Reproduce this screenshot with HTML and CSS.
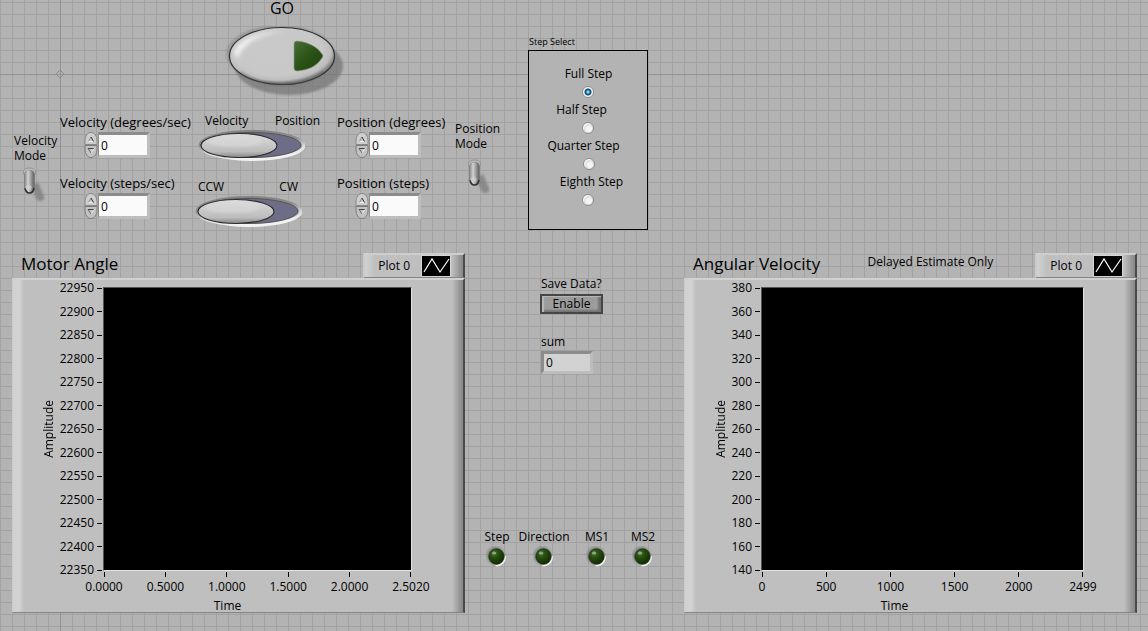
FILE: index.html
```
<!DOCTYPE html>
<html lang="en">
<head>
<meta charset="utf-8">
<title>Motor Control</title>
<link rel="stylesheet" href="styles.css">
</head>
<body>
<svg class="defs" aria-hidden="true">
  <defs>
    <linearGradient id="metal" x1="0" y1="0" x2="0" y2="1">
      <stop offset="0" stop-color="#dedede"/><stop offset=".3" stop-color="#cfcfcf"/><stop offset=".75" stop-color="#bcbcbc"/><stop offset="1" stop-color="#858585"/>
    </linearGradient>
    <radialGradient id="dome" cx=".46" cy=".42" r=".56">
      <stop offset="0" stop-color="#c9c9c9"/><stop offset=".75" stop-color="#c8c8c8"/><stop offset=".9" stop-color="#bdbdbd"/><stop offset="1" stop-color="#7d7d7d"/>
    </radialGradient>
    <linearGradient id="rim" x1="0" y1="0" x2=".3" y2="1">
      <stop offset="0" stop-color="#808080"/><stop offset=".45" stop-color="#8c8c8c"/><stop offset=".75" stop-color="#dcdcdc"/><stop offset="1" stop-color="#f2f2f2"/>
    </linearGradient>
    <linearGradient id="stick" x1="0" y1="0" x2="1" y2="0">
      <stop offset="0" stop-color="#858585"/><stop offset=".35" stop-color="#d2d2d2"/><stop offset="1" stop-color="#5c5c5c"/>
    </linearGradient>
    <linearGradient id="arrow" x1="0" y1="0" x2="1" y2="1">
      <stop offset="0" stop-color="#4a6f38"/><stop offset=".5" stop-color="#2b5216"/><stop offset="1" stop-color="#1d4208"/>
    </linearGradient>
    <radialGradient id="lamp" cx=".35" cy=".3" r=".75">
      <stop offset="0" stop-color="#4f7540"/><stop offset=".35" stop-color="#28500f"/><stop offset="1" stop-color="#0f2903"/>
    </radialGradient>
    <filter id="soft" x="-20%" y="-20%" width="140%" height="140%"><feGaussianBlur stdDeviation="1"/></filter>
    <filter id="softer" x="-20%" y="-20%" width="140%" height="140%"><feGaussianBlur stdDeviation="2"/></filter>

    <symbol id="switch" viewBox="0 0 108 31">
      <ellipse cx="55" cy="15.500" rx="52" ry="14" fill="none" stroke="url(#rim)" stroke-width="3"/>
      <ellipse cx="54" cy="15" rx="50" ry="12.500" fill="#6d6d87" stroke="#555" stroke-width="1"/>
      <ellipse cx="42" cy="15.500" rx="38" ry="12" fill="url(#metal)" stroke="#2e2e2e" stroke-width="1.200"/>
      <ellipse cx="38" cy="11.500" rx="27" ry="5.500" fill="#dadada" opacity=".6" filter="url(#soft)"/>
    </symbol>
    <symbol id="lever" viewBox="0 0 24 36">
      <path d="M9 20 L16 15 L22 29 Q23 34 18 34 Q15 34 14 31Z" fill="#808080" opacity=".8" filter="url(#soft)"/>
      <ellipse cx="7.500" cy="5.500" rx="6" ry="4.500" fill="#c9c9c9" stroke="#8f8f8f"/>
      <rect x="2.500" y="3" width="10" height="23" rx="4.500" fill="url(#stick)" stroke="#777" stroke-width=".6"/>
      <path d="M3 21 Q4 26 7.500 26 Q11 26 12 21" fill="none" stroke="#303030" stroke-width="1.400"/>
      <ellipse cx="6.500" cy="20.500" rx="3" ry="2.500" fill="#d0d0d0" opacity=".8"/>
    </symbol>
    <symbol id="led" viewBox="0 0 22 22">
      <circle cx="9.500" cy="9.500" r="9" fill="#7c7c7c" filter="url(#soft)" opacity=".8"/>
      <path d="M19 10 A8.500 8.500 0 0 1 9.500 19.500" fill="none" stroke="#f0f0f0" stroke-width="1.600"/>
      <circle cx="10.500" cy="10.500" r="7.700" fill="url(#lamp)" stroke="#1a2d10" stroke-width=".8"/>
      <ellipse cx="8" cy="7" rx="2.200" ry="1.500" fill="#9fb496" opacity=".8"/>
    </symbol>
    <symbol id="up" viewBox="0 0 14 13">
      <path d="M1 12.500 V9 C1 4 3.500 .500 7 .500 S13 4 13 9 V12.500Z" fill="#cecece" stroke="#888"/>
      <path d="M4.500 9.500 L7 5" stroke="#8a8a8a" fill="none"/><path d="M7 5 L9.500 9.500" stroke="#333" fill="none"/><path d="M4.500 9.500 H9" stroke="#eee" fill="none"/>
    </symbol>
    <symbol id="down" viewBox="0 0 14 13">
      <path d="M1 .500 V4 C1 9 3.500 12.500 7 12.500 S13 9 13 4 V.500Z" fill="#c2c2c2" stroke="#7c7c7c"/>
      <path d="M4 3.500 H10" stroke="#444" fill="none"/><path d="M10 3.500 L7 8" stroke="#eee" fill="none"/><path d="M7 8 L4 3.500" stroke="#666" fill="none"/>
    </symbol>
    <symbol id="trace" viewBox="0 0 28 20">
      <path d="M2 16 L10 3 L18 16 L27 3" fill="none" stroke="#fff" stroke-width="1.200"/>
    </symbol>
  </defs>
</svg>

<main class="front">
  <svg class="origin" viewBox="0 0 10 10" aria-hidden="true"><path d="M5 1 L9 5 L5 9 L1 5Z" fill="none" stroke="#8c8c8c"/></svg>

  <section class="controls">
    <div class="motor">
      <div class="go">
        <label class="go-label" for="go">GO</label>
        <button id="go" class="bare" type="button">
          <svg width="126" height="72" viewBox="0 0 126 72" aria-hidden="true">
            <ellipse cx="70" cy="40" rx="54" ry="29" fill="#777" opacity=".75" filter="url(#soft)"/>
            <ellipse cx="61" cy="28" rx="54" ry="29" fill="#777" opacity=".4" filter="url(#soft)"/>
            <ellipse cx="63" cy="30" rx="52.500" ry="28.500" fill="url(#dome)" stroke="#303030" stroke-width="1.200"/>
            <path d="M15 28 C17 14 40 5 67 5 C42 8 24 16 19 32Z" fill="#f8f8f8" opacity=".9" filter="url(#softer)"/>
            <path d="M22 46 C42 62 84 62 104 46" fill="none" stroke="#555" stroke-width="2" opacity=".45" filter="url(#soft)"/>
            <path d="M75 18 Q75 15 78 15 C88 16 98 20 103 28 Q105 30 103 32 C98 40 90 44 78 45 Q75 45 75 42Z" fill="url(#arrow)" stroke="#87957f" stroke-width=".7"/>
          </svg>
        </button>
      </div>

      <div class="mode mode-velocity">
        <label for="vmode">Velocity<br>Mode</label>
        <button id="vmode" class="bare" type="button"><svg width="24" height="36"><use href="#lever"/></svg></button>
      </div>

      <div class="numbers">
        <div class="number">
          <label for="vdeg">Velocity (degrees/sec)</label>
          <div class="spin">
            <div class="arrows"><button class="bare" type="button" aria-label="Increase"><svg width="14" height="13"><use href="#up"/></svg></button><button class="bare" type="button" aria-label="Decrease"><svg width="14" height="13"><use href="#down"/></svg></button></div>
            <input id="vdeg" type="text" value="0">
          </div>
        </div>
        <div class="number">
          <label for="vstep">Velocity (steps/sec)</label>
          <div class="spin">
            <div class="arrows"><button class="bare" type="button" aria-label="Increase"><svg width="14" height="13"><use href="#up"/></svg></button><button class="bare" type="button" aria-label="Decrease"><svg width="14" height="13"><use href="#down"/></svg></button></div>
            <input id="vstep" type="text" value="0">
          </div>
        </div>
      </div>

      <div class="switches">
        <div class="switch">
          <div class="ends ends-wide"><span>Velocity</span><span>Position</span></div>
          <button class="bare" type="button" aria-label="Velocity or position"><svg width="108" height="31"><use href="#switch"/></svg></button>
        </div>
        <div class="switch">
          <div class="ends"><span>CCW</span><span>CW</span></div>
          <button class="bare" type="button" aria-label="Counterclockwise or clockwise"><svg width="108" height="31"><use href="#switch"/></svg></button>
        </div>
      </div>

      <div class="numbers numbers-position">
        <div class="number">
          <label for="pdeg">Position (degrees)</label>
          <div class="spin">
            <div class="arrows"><button class="bare" type="button" aria-label="Increase"><svg width="14" height="13"><use href="#up"/></svg></button><button class="bare" type="button" aria-label="Decrease"><svg width="14" height="13"><use href="#down"/></svg></button></div>
            <input id="pdeg" type="text" value="0">
          </div>
        </div>
        <div class="number">
          <label for="pstep">Position (steps)</label>
          <div class="spin">
            <div class="arrows"><button class="bare" type="button" aria-label="Increase"><svg width="14" height="13"><use href="#up"/></svg></button><button class="bare" type="button" aria-label="Decrease"><svg width="14" height="13"><use href="#down"/></svg></button></div>
            <input id="pstep" type="text" value="0">
          </div>
        </div>
      </div>

      <div class="mode mode-position">
        <label for="pmode">Position<br>Mode</label>
        <button id="pmode" class="bare" type="button"><svg width="24" height="36"><use href="#lever"/></svg></button>
      </div>
    </div>

    <div class="steps" role="radiogroup" aria-labelledby="steps-title">
      <div id="steps-title" class="steps-title">Step Select</div>
      <div class="steps-box">
        <div class="step"><label for="s1">Full Step</label><input id="s1" type="radio" name="step" checked></div>
        <div class="step step-half"><label for="s2">Half Step</label><input id="s2" type="radio" name="step"></div>
        <div class="step step-quarter"><label for="s3">Quarter Step</label><input id="s3" type="radio" name="step"></div>
        <div class="step step-eighth"><label for="s4">Eighth Step</label><input id="s4" type="radio" name="step"></div>
      </div>
    </div>
  </section>

  <section class="graphs">
    <article class="graph">
      <header class="graph-head">
        <h2>Motor Angle</h2>
        <div class="legend"><span>Plot 0</span><svg width="28" height="20"><use href="#trace"/></svg></div>
      </header>
      <div class="graph-body angle">
        <div class="y-title"><span>Amplitude</span></div>
        <ol class="y-axis">
          <li>22950</li><li>22900</li><li>22850</li><li>22800</li><li>22750</li><li>22700</li><li>22650</li><li>22600</li><li>22550</li><li>22500</li><li>22450</li><li>22400</li><li>22350</li>
        </ol>
        <div class="plot"></div>
        <ol class="x-axis">
          <li>0.0000</li><li>0.5000</li><li>1.0000</li><li>1.5000</li><li>2.0000</li><li>2.5020</li>
        </ol>
        <div class="x-title">Time</div>
      </div>
    </article>

    <div class="middle">
      <div class="data">
        <label for="save">Save Data?</label>
        <button id="save" class="enable" type="button">Enable</button>
        <label class="sum-label" for="sum">sum</label>
        <input id="sum" class="sum" type="text" value="0" readonly>
      </div>
      <div class="leds">
        <div class="led"><span>Step</span><svg width="22" height="22"><use href="#led"/></svg></div>
        <div class="led"><span>Direction</span><svg width="22" height="22"><use href="#led"/></svg></div>
        <div class="led"><span>MS1</span><svg width="22" height="22"><use href="#led"/></svg></div>
        <div class="led"><span>MS2</span><svg width="22" height="22"><use href="#led"/></svg></div>
      </div>
    </div>

    <article class="graph">
      <header class="graph-head">
        <h2>Angular Velocity</h2>
        <span class="note">Delayed Estimate Only</span>
        <div class="legend"><span>Plot 0</span><svg width="28" height="20"><use href="#trace"/></svg></div>
      </header>
      <div class="graph-body speed">
        <div class="y-title"><span>Amplitude</span></div>
        <ol class="y-axis">
          <li>380</li><li>360</li><li>340</li><li>320</li><li>300</li><li>280</li><li>260</li><li>240</li><li>220</li><li>200</li><li>180</li><li>160</li><li>140</li>
        </ol>
        <div class="plot"></div>
        <ol class="x-axis">
          <li>0</li><li>500</li><li>1000</li><li>1500</li><li>2000</li><li>2499</li>
        </ol>
        <div class="x-title">Time</div>
      </div>
    </article>
  </section>
</main>
</body>
</html>
```

FILE: styles.css
```
* { box-sizing: border-box; }

body {
  margin: 0;
  color: #000;
  font: 12px/16px "Open Sans", "Noto Sans", sans-serif;
}

svg { display: block; }
.defs { position: absolute; width: 0; height: 0; }

.bare {
  display: block;
  margin: 0;
  padding: 0;
  border: 0;
  background: none;
}

ol { margin: 0; padding: 0; list-style: none; }

.front {
  position: relative;
  display: flex;
  flex-direction: column;
  min-height: 100vh;
  padding: 0 11px 18px 12px;
  background:
    linear-gradient(#939393, #939393) 60px 0 / 1px 100% no-repeat,
    linear-gradient(#939393, #939393) 0 74px / 100% 1px no-repeat,
    linear-gradient(90deg, #a2a2a2 1px, transparent 1px) 0 0 / 12px 12px,
    linear-gradient(#a2a2a2 1px, transparent 1px) 0 2px / 12px 12px,
    #b3b3b3;
}

/* marks the zero point of the panel grid */
.origin { position: absolute; left: 55px; top: 69px; width: 10px; height: 10px; }

.controls { display: flex; padding-bottom: 22px; }

.motor {
  display: grid;
  grid-template-columns: 46px 134px 143px 118px 73px;
  grid-template-rows: 112px auto;
  padding-left: 2px;
}

.go {
  grid-column: 3;
  margin-left: 25px;
  width: 126px;
  display: flex;
  flex-direction: column;
  align-items: center;
  gap: 9px;
}
.go-label { font-size: 16px; line-height: 17px; }

.mode, .numbers, .switches { grid-row: 2; }

.mode { line-height: 15px; }
.mode-velocity { grid-column: 1; padding-top: 21px; }
.mode-velocity .bare { margin: 4px 0 0 8px; }
.mode-position { padding-top: 9px; }
.mode-position .bare { margin: 8px 0 0 12px; }

.numbers {
  display: flex;
  flex-direction: column;
  gap: 17px;
  padding-top: 2px;
  white-space: nowrap;
}
.number label { display: block; font-size: 13px; }
.spin { display: flex; align-items: center; margin: 2px 0 0 24px; }
.numbers-position .spin { margin-left: 18px; }

.spin input, .sum {
  font: inherit;
  color: #000;
  border: 3px solid;
  border-color: #8c8c8c #bdbdbd #bdbdbd #8c8c8c;
  padding: 0 0 0 2px;
  background: #fafafa;
}
.spin input { width: 52px; height: 26px; border-left-width: 1px; }

.switches { display: flex; flex-direction: column; gap: 18px; padding-top: 1px; }
.switch .bare { margin-top: 1px; }
.ends { display: flex; justify-content: space-between; width: 104px; padding-left: 4px; }
.ends-wide { width: 126px; padding-left: 11px; }
.ends-wide + .bare { margin-left: 3px; }

.steps { width: 120px; padding-top: 34px; }
.steps-title { font-size: 9px; line-height: 16px; padding-left: 1px; }
.steps-box {
  display: flex;
  flex-direction: column;
  align-items: center;
  gap: 4px;
  height: 180px;
  padding: 15px 0 0 1px;
  border: 1px solid #000;
  background: #b3b3b3;
}
.step { display: flex; flex-direction: column; align-items: center; gap: 4px; }
.step-half label { padding-right: 14px; }
.step-quarter label { padding-right: 10px; }
.step-eighth label { padding-left: 6px; }

.step input {
  appearance: none;
  width: 12px;
  height: 12px;
  margin: 0;
  border: 1px solid #8c8c8c;
  border-radius: 50%;
  background: radial-gradient(circle at 60% 60%, #f5f5f5 0 30%, #dcdcdc 50%, #fafafa 65%);
}
.step input:checked {
  background: radial-gradient(circle at 50% 50%, #7fd0f5 0 1px, #1d73a8 2px, #123c5e 3px, #fafafa 4px);
}

.graphs {
  flex: 1;
  display: grid;
  grid-template-columns: 453fr 219fr 453fr;
}

.graph { display: flex; flex-direction: column; }
.graph-head { display: flex; align-items: flex-start; height: 26px; padding-left: 9px; }
.graph-head h2 {
  margin: 0 auto 0 0;
  font-size: 17px;
  font-weight: 400;
  line-height: 24px;
}
.note { padding-top: 2px; margin-right: 42px; }

.legend {
  display: flex;
  align-items: center;
  gap: 12px;
  height: 25px;
  margin-top: 1px;
  padding: 0 13px;
  border: solid;
  border-width: 2px 2px 1px 2px;
  border-color: #cecece #4a4a4a #848484 #cacaca;
  background:
    linear-gradient(90deg, #bfbfbf, #858585) right / 11px 100% no-repeat,
    linear-gradient(90deg, #d2d2d2, #bfbfbf) left / 10px 100% no-repeat,
    #bfbfbf;
}
.legend svg { background: #000; outline: 1px solid #d4d4d4; }

.graph-body {
  flex: 1;
  display: grid;
  grid-template-rows: 1fr 27px 14px;
  padding: 7px 51px 0 0;
  border: solid;
  border-width: 2px 2px 1px 1px;
  border-color: #d0d0d0 #4a4a4a #848484 #cacaca;
  background:
    linear-gradient(90deg, #bfbfbf, #858585) right / 11px 100% no-repeat,
    linear-gradient(90deg, #d2d2d2 60%, #bfbfbf) left / 11px 100% no-repeat,
    #bfbfbf;
}
.angle { grid-template-columns: 46px 44px 1fr; }
.speed { grid-template-columns: 46px 30px 1fr; }

.y-title { display: flex; align-items: center; justify-content: flex-end; padding-right: 2px; }
.y-title span { writing-mode: vertical-rl; transform: rotate(180deg); }

.y-axis {
  display: flex;
  flex-direction: column;
  justify-content: space-between;
  margin: -7px 0;
}
.y-axis li { display: flex; align-items: center; justify-content: flex-end; gap: 3px; padding-right: 1px; }
.y-axis li::after { content: ""; width: 5px; height: 1px; background: #000; }

.plot {
  background: #000;
  border: 1px solid;
  border-color: #555 #e2e2e2 #e2e2e2 #555;
}

.x-axis {
  grid-column: 3;
  display: flex;
  justify-content: space-between;
  padding: 1px 1px 0;
}
.x-axis li { width: 0; display: flex; flex-direction: column; align-items: center; gap: 2px; }
.x-axis li::before { content: ""; flex: none; width: 1px; height: 5px; background: #000; }

.x-title { grid-column: 1 / -1; text-align: center; }
.angle .x-title { padding-left: 30px; }
.speed .x-title { padding-left: 20px; }

.middle { display: flex; flex-direction: column; justify-content: space-between; padding: 24px 0 45px; }
.data { display: flex; flex-direction: column; align-items: flex-start; padding-left: 76px; }

.enable {
  width: 63px;
  height: 20px;
  margin: 2px 0 0 -1px;
  padding: 0;
  font: inherit;
  line-height: 16px;
  color: #000;
  border: 2px solid #454545;
  background: #9c9c9c;
  box-shadow: inset 2px 1px 1px #b9b9b9, inset -3px -2px 2px #747474;
}
.sum-label { margin-top: 20px; }
.sum { width: 52px; height: 23px; margin-top: 1px; background: #d2d2d2; }

.leds { display: grid; grid-template-columns: 46px 48px 58px 34px; padding-left: 9px; }
.led { display: flex; flex-direction: column; align-items: center; gap: 1px; }
```
